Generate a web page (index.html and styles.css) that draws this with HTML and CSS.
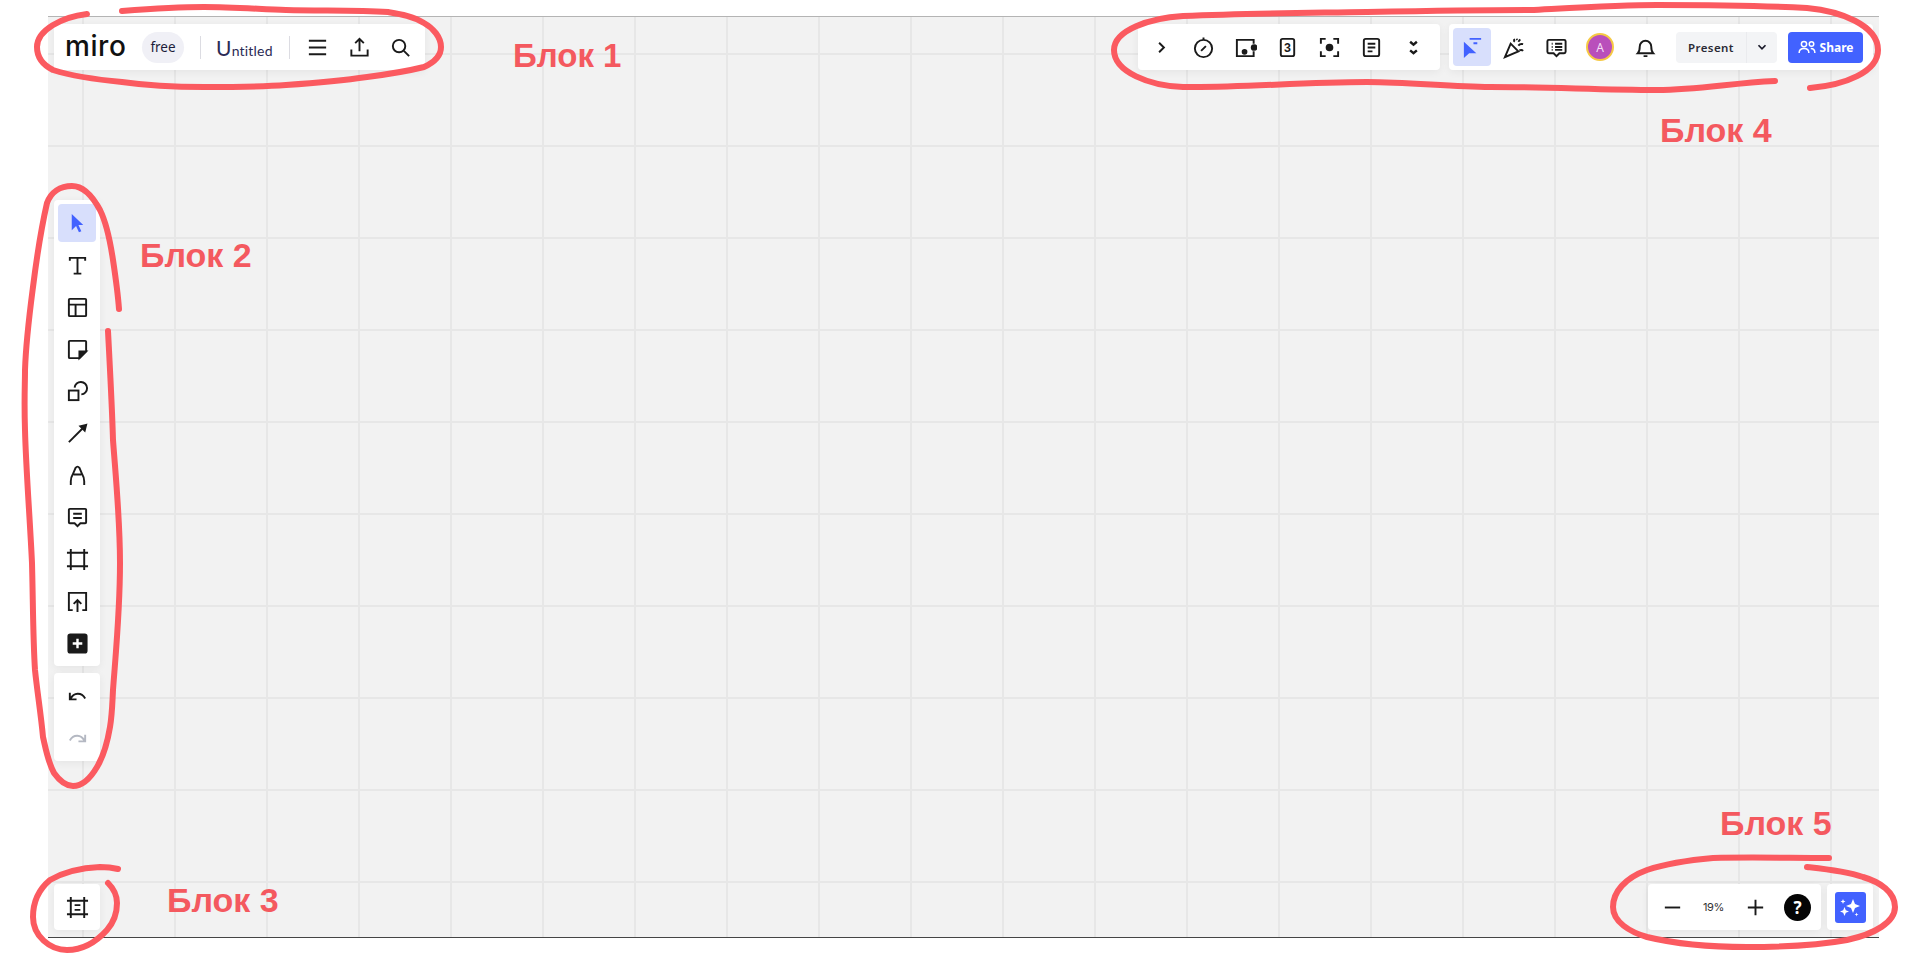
FILE: index.html
```html
<!DOCTYPE html>
<html lang="en">
<head>
    <meta charset="UTF-8">
    <meta name="viewport" content="width=device-width, initial-scale=1.0">
    <title>Miro board</title>
    <link rel="stylesheet" href="styles.css">
</head>
<body>

<main class="board">
    <div class="top-row">
        <div class="panel brand-panel">
            <span class="logo">miro</span>
            <span class="plan-pill">free</span>
            <span class="divider"></span>
            <span class="board-title"><span class="board-initial">U</span>ntitled</span>
            <span class="divider"></span>
            <button class="tool menu-tool"><svg class="icon" viewBox="0 0 24 24"><path d="M3 5h18M3 12h18M3 19h18"/></svg></button>
            <button class="tool"><svg class="icon" viewBox="0 0 24 24"><path d="M12 16V3M7.500 7.500 12 3l4.500 4.500M3.500 14v6.500h17V14"/></svg></button>
            <button class="tool"><svg class="icon" viewBox="0 0 24 24"><circle cx="10.500" cy="10.500" r="6.500"/><path d="m15.500 15.500 5.500 5.500"/></svg></button>
        </div>

        <div class="panel apps-panel">
            <button class="tool"><svg class="icon" viewBox="0 0 24 24"><path d="m9.500 7 5 5-5 5"/></svg></button>
            <button class="tool"><svg class="icon" viewBox="0 0 24 24"><circle cx="12" cy="13" r="9"/><path d="M12 1.500V4M9.500 15.500l5-5"/></svg></button>
            <button class="tool"><svg class="icon" viewBox="0 0 24 24"><path d="M20.500 8V4H3v17h17.500v-5"/><circle cx="11" cy="16.500" r="2" class="solid"/><circle cx="21" cy="12" r="2.500" class="solid"/></svg></button>
            <button class="tool"><svg class="icon" viewBox="0 0 24 24"><rect x="5" y="3" width="14" height="18" rx="2"/><text x="12" y="17" class="card-number">3</text></svg></button>
            <button class="tool"><svg class="icon" viewBox="0 0 24 24"><path d="M3 8V3h5M16 3h5v5M21 16v5h-5M8 21H3v-5"/><circle cx="12" cy="12" r="3" class="solid"/></svg></button>
            <button class="tool"><svg class="icon" viewBox="0 0 24 24"><rect x="4" y="3" width="16" height="18" rx="2"/><path d="M8 8h8M8 12h8M8 16h5"/></svg></button>
            <button class="tool"><svg class="icon chevrons" viewBox="0 0 24 24"><path d="m8.500 6 3.500 3 3.500-3M8.500 15l3.500 3 3.500-3"/></svg></button>
        </div>

        <div class="panel collab-panel">
            <button class="tool tool-active"><svg class="icon" viewBox="0 0 24 24"><path class="blue-fill" d="M3 6v17l5.500-5H16z"/><path class="blue-line" d="M9 3h12M13 7.500h4"/></svg></button>
            <button class="tool"><svg class="icon" viewBox="0 0 24 24"><path d="M2 22 8 8l8 8zM11 6c1-1 1-2 .5-3M16 10c1.500-2 3-2 5-1.500M17 15c1.500-.500 3-.500 4 .500M14 3l1 1M18 3.500l-2 2.500"/></svg></button>
            <button class="tool"><svg class="icon" viewBox="0 0 24 24"><path d="M4 4h16a1.500 1.500 0 0 1 1.500 1.500v11A1.500 1.500 0 0 1 20 18h-5l-3 3-3-3H4a1.500 1.500 0 0 1-1.500-1.500v-11A1.500 1.500 0 0 1 4 4zM7 8h1M7 11.500h1M7 14.500h1M10.500 8H18M10.500 11.500H18M10.500 14.500H18"/></svg></button>
            <span class="avatar">A</span>
            <button class="tool bell-tool"><svg class="icon" viewBox="0 0 24 24"><path d="M4 18c2-2 2-4 2-7a6 6 0 0 1 12 0c0 3 0 5 2 7zM10 21h4"/></svg></button>
            <div class="present-split">
                <span class="present-label">Present</span>
                <span class="present-caret"><svg class="caret" viewBox="0 0 24 24"><path d="m6 9 6 6 6-6"/></svg></span>
            </div>
            <button class="share-button"><svg class="share-icon" viewBox="0 0 24 24"><circle cx="8" cy="8" r="3.500"/><circle cx="18" cy="8" r="3"/><path d="M1.500 20c0-4 2.500-6 6.500-6s6.500 2 6.500 6M17 14c3.500 0 5.500 2 5.500 6"/></svg>Share</button>
        </div>
    </div>

    <div class="side-tools">
        <div class="panel tool-column">
            <button class="tool tool-active"><svg class="icon" viewBox="0 0 24 24"><path class="blue-fill" d="M6 2v17l4.500-4.500 3 6.500 2.500-1-3-6.500h5z"/></svg></button>
            <button class="tool"><svg class="icon" viewBox="0 0 24 24"><path d="M4 7V4h16v3M12 4v16M8 20.500h8"/></svg></button>
            <button class="tool"><svg class="icon" viewBox="0 0 24 24"><rect x="3" y="3" width="18" height="18" rx="1"/><path d="M3 9h18M10 9v12"/></svg></button>
            <button class="tool"><svg class="icon" viewBox="0 0 24 24"><path d="M21 14V4a1 1 0 0 0-1-1H4a1 1 0 0 0-1 1v16a1 1 0 0 0 1 1h10z"/><path class="solid" d="M21 14h-7v7z"/></svg></button>
            <button class="tool"><svg class="icon" viewBox="0 0 24 24"><rect x="3" y="11" width="10" height="10"/><path d="M9 8a6.500 6.500 0 1 1 7 7"/></svg></button>
            <button class="tool"><svg class="icon" viewBox="0 0 24 24"><path d="M3 21 18 6"/><path class="solid" d="M21 3l-6 1.500 4.500 4.500z"/></svg></button>
            <button class="tool"><svg class="icon" viewBox="0 0 24 24"><path d="M5 22v-4q0-4 2-7L10 4q2-2.500 4 0l3 7q2 3 2 7v4M8 11h8"/></svg></button>
            <button class="tool"><svg class="icon" viewBox="0 0 24 24"><path d="M4 3h16a1 1 0 0 1 1 1v13a1 1 0 0 1-1 1h-5l-3 3-3-3H4a1 1 0 0 1-1-1V4a1 1 0 0 1 1-1zM7.500 8h9M7.500 12.500h9"/></svg></button>
            <button class="tool"><svg class="icon" viewBox="0 0 24 24"><path d="M1 5h22M1 19h22M5 1v22M19 1v22"/></svg></button>
            <button class="tool"><svg class="icon" viewBox="0 0 24 24"><path d="M7 21H3V3h18v18h-4M12 23V11M8 14.500l4-4 4 4"/></svg></button>
            <button class="tool"><svg class="icon" viewBox="0 0 24 24"><rect x="2.500" y="2.500" width="19" height="19" rx="2" class="solid"/><path class="white-line" d="M12 7v10M7 12h10"/></svg></button>
        </div>
        <div class="panel tool-column">
            <button class="tool"><svg class="icon" viewBox="0 0 24 24"><path d="M5 14c3-6 11-7 15 0M4 8v7h7"/></svg></button>
            <button class="tool tool-disabled"><svg class="icon" viewBox="0 0 24 24"><path d="M19 14c-3-6-11-7-15 0M20 8v7h-7"/></svg></button>
        </div>
    </div>

    <div class="bottom-row">
        <div class="panel frames-panel">
            <button class="tool"><svg class="icon" viewBox="0 0 24 24"><path d="M1 5h22M1 19h22M5 1v22M19 1v22M9 9.500h6M9 14.500h6"/></svg></button>
        </div>
        <div class="panel zoom-panel">
            <button class="tool"><svg class="icon" viewBox="0 0 24 24"><path d="M4 12h16"/></svg></button>
            <span class="zoom-value">19%</span>
            <button class="tool"><svg class="icon" viewBox="0 0 24 24"><path d="M4 12h16M12 4v16"/></svg></button>
            <span class="help-badge">?</span>
        </div>
        <div class="panel magic-panel">
            <span class="magic-button"><svg class="magic-icon" viewBox="0 0 24 24"><path d="m15 4 2 5 5 2-5 2-2 5-2-5-5-2 5-2zM6.500 12l1.300 3.200L11 16.500l-3.200 1.300L6.500 21l-1.300-3.200L2 16.500l3.200-1.300zM5 4l.7 1.800 1.800.7-1.800.7L5 9l-.7-1.800-1.800-.7 1.800-.7zM18.500 17.500l.5 1.500 1.500.5-1.500.5-.5 1.500-.5-1.500-1.500-.5 1.500-.5z"/></svg></span>
        </div>
    </div>
</main>

<!-- hand drawn marks over the screenshot -->
<svg class="marks" viewBox="0 0 1919 958">
    <path d="M87 14C62 17 37 30 37 47C37 60 45 66 53 70C75 77 100 80 122 82C150 86 175 87 204 87C230 87 260 87 286 85C315 83 340 81 367 77C390 74 408 71 424 67C435 62 441 55 441 47C441 37 433 28 424 23C413 16 400 14 388 12C355 10 320 11 286 10C258 9 232 7 204 7C175 7 148 9 122 11"/>
    <path d="M1775 81C1730 83 1700 90 1657 90C1600 90 1550 87 1490 87C1450 87 1410 82 1367 82C1300 82 1240 88 1183 87C1150 86 1114 72 1114 50C1114 30 1150 18 1183 16C1250 13 1300 13 1367 12C1420 11 1480 10 1530 10C1570 8 1620 5 1657 5C1710 5 1770 6 1807 8C1840 11 1878 25 1878 50C1878 72 1845 85 1810 88"/>
    <path d="M108 331C110 370 112 405 113 440C116 480 120 520 120 563C120 610 116 650 113 690C112 710 112 715 110 727C107 745 103 757 97 767C90 779 82 786 73 786C65 786 59 780 54 773C48 762 46 750 43 737C41 715 37 690 35 670C33 640 33 600 32 563C30 520 26 470 25 430C24 400 25 385 25 370C26 340 30 310 33 287C37 255 42 225 47 203C51 192 60 186 72 186C84 186 93 197 100 210C106 222 110 240 113 260C116 280 118 295 119 309"/>
    <path d="M118 869C110 867 105 867 100 867C78 868 62 873 50 880C38 890 33 903 33 917C33 936 50 950 67 950C85 950 98 940 107 930C114 922 117 912 117 903C117 894 113 888 108 883"/>
    <path d="M1829 858C1790 858 1750 857 1713 858C1690 860 1665 864 1647 870C1625 878 1613 892 1613 907C1613 922 1630 932 1647 937C1680 945 1715 947 1747 947C1785 947 1820 945 1847 940C1875 934 1895 922 1895 907C1895 892 1880 882 1863 877C1845 871 1825 869 1807 867"/>
</svg>
<span class="mark-label label-one">Блок 1</span>
<span class="mark-label label-two">Блок 2</span>
<span class="mark-label label-three">Блок 3</span>
<span class="mark-label label-four">Блок 4</span>
<span class="mark-label label-five">Блок 5</span>

</body>
</html>
```

FILE: styles.css
```css
html, body {
    margin: 0;
    height: 100%;
}
body {
    position: relative;
    background-color: #fff;
    font-family: "Noto Sans", sans-serif;
    overflow: hidden;
    padding: 16px 40px 0 48px;
    box-sizing: border-box;
}
button {
    border: none;
    background: none;
    padding: 0;
    font-family: inherit;
}
.board {
    height: 922px;
    box-sizing: border-box;
    display: flex;
    flex-direction: column;
    padding: 7px 6px 7px 6px;
    background-color: #f2f2f2;
    background-image:
        linear-gradient(#e7e7e7 2px, transparent 2px),
        linear-gradient(90deg, #e7e7e7 2px, transparent 2px);
    background-size: 92px 92px;
    background-position: 34px 36px;
    border-top: 1px solid #b4b4b4;
    border-bottom: 1px solid #454545;
}
.panel {
    display: flex;
    align-items: center;
    background-color: #fff;
    border-radius: 4px;
    box-shadow: 0 2px 8px rgba(0, 0, 0, 0.06);
}
.tool {
    flex: none;
    width: 38px;
    height: 38px;
    display: flex;
    align-items: center;
    justify-content: center;
    border-radius: 4px;
    color: #1a1a1a;
}
.tool-active {
    background-color: #d8dffc;
}
.tool-disabled {
    color: #b4b8c2;
}
.icon {
    width: 23px;
    height: 23px;
    fill: none;
    stroke: currentColor;
    stroke-width: 2;
}
.chevrons {
    stroke-width: 2.500;
}
.solid {
    fill: currentColor;
}
.blue-fill {
    fill: #4262ff;
    stroke: none;
}
.blue-line {
    stroke: #4262ff;
}
.white-line {
    stroke: #fff;
    stroke-width: 2.500;
}
.card-number {
    font-family: "Liberation Sans", sans-serif;
    font-size: 13px;
    font-weight: 700;
    text-anchor: middle;
    fill: currentColor;
    stroke: none;
}

/* top row */
.top-row {
    display: flex;
    height: 46px;
}
.brand-panel {
    width: 371px;
    margin-right: auto;
    box-sizing: border-box;
    padding-left: 11px;
}
.logo {
    font-family: Inter, sans-serif;
    font-size: 28px;
    font-weight: 500;
    letter-spacing: 0.6px;
    color: #111;
    width: 77px;
    line-height: 46px;
    margin-top: -3px;
}
.plan-pill {
    width: 42px;
    height: 31px;
    display: flex;
    align-items: center;
    justify-content: center;
    border-radius: 16px;
    background-color: #f0f0f6;
    font-size: 13.500px;
    color: #1d1d3a;
}
.divider {
    width: 1px;
    height: 23px;
    background-color: #dcdce2;
}
.plan-pill + .divider {
    margin-left: 16px;
}
.board-title {
    width: 58px;
    margin: 0 15px;
    font-family: Lato, sans-serif;
    font-size: 14px;
    letter-spacing: 0.2px;
    white-space: nowrap;
    color: #2b2b55;
}
.board-initial {
    font-size: 21px;
}
.menu-tool {
    margin-left: 8px;
    margin-right: 4px;
}
.menu-tool + .tool {
    margin-right: 3px;
}
.apps-panel {
    width: 302px;
    box-sizing: border-box;
    padding-left: 4px;
    gap: 4px;
    margin-right: 9px;
}
.collab-panel {
    width: 424px;
    box-sizing: border-box;
    padding-left: 4px;
    gap: 4px;
}
.avatar {
    flex: none;
    width: 24px;
    height: 24px;
    margin-left: 7px;
    display: flex;
    align-items: center;
    justify-content: center;
    border-radius: 50%;
    border: 2px solid #f6c944;
    background-color: #b94fbb;
    color: #f3dff5;
    font-size: 12px;
}
.bell-tool {
    margin-left: 8px;
}
.present-split {
    display: flex;
    width: 101px;
    height: 31px;
    margin-left: 8px;
    border-radius: 4px;
    background-color: #f3f4f6;
    font-size: 11.500px;
    font-weight: 600;
    color: #2a2a35;
}
.present-label {
    width: 70px;
    display: flex;
    align-items: center;
    justify-content: center;
    letter-spacing: 0.4px;
    border-right: 1px solid #eaebee;
}
.present-caret {
    flex: 1;
    display: flex;
    align-items: center;
    justify-content: center;
}
.caret {
    width: 14px;
    height: 14px;
    fill: none;
    stroke: #1a1a2a;
    stroke-width: 3;
}
.share-button {
    width: 75px;
    height: 31px;
    margin-left: 7px;
    display: flex;
    align-items: center;
    justify-content: center;
    gap: 4px;
    border-radius: 4px;
    background-color: #4262ff;
    color: #fff;
    font-size: 12px;
    font-weight: 700;
}
.share-icon {
    width: 18px;
    height: 18px;
    fill: none;
    stroke: #fff;
    stroke-width: 2;
}

/* left toolbar */
.side-tools {
    display: flex;
    flex-direction: column;
    gap: 7px;
    margin: 130px 0 0 0;
    width: 46px;
}
.tool-column {
    flex-direction: column;
    gap: 4px;
    padding: 4px;
}

/* bottom row */
.bottom-row {
    display: flex;
    margin-top: auto;
    height: 46px;
}
.frames-panel {
    width: 46px;
    justify-content: center;
    margin-right: auto;
}
.zoom-panel {
    width: 173px;
    box-sizing: border-box;
    padding-left: 5px;
    margin-right: 6px;
}
.zoom-value {
    width: 45px;
    text-align: center;
    font-family: Inter, sans-serif;
    font-size: 11px;
    letter-spacing: -0.3px;
    color: #333;
}
.help-badge {
    width: 27px;
    height: 27px;
    margin-left: 10px;
    display: flex;
    align-items: center;
    justify-content: center;
    border-radius: 50%;
    background-color: #050505;
    color: #fff;
    font-size: 17px;
    font-weight: 700;
}
.magic-panel {
    width: 46px;
    justify-content: center;
}
.magic-button {
    width: 31px;
    height: 31px;
    display: flex;
    align-items: center;
    justify-content: center;
    border-radius: 3px;
    background-color: #4262ff;
}
.magic-icon {
    width: 24px;
    height: 24px;
    fill: #fff;
}

/* annotations over the screenshot */
.marks {
    position: absolute;
    left: 0;
    top: 0;
    width: 1919px;
    height: 958px;
    fill: none;
    stroke: #fb5a60;
    stroke-width: 6;
    stroke-linecap: round;
    pointer-events: none;
}
.mark-label {
    position: absolute;
    font-family: "Liberation Sans", sans-serif;
    font-size: 34px;
    font-weight: 700;
    line-height: 40px;
    white-space: nowrap;
    color: #f4595f;
}
.label-one { left: 513px; top: 36px; font-size: 33px; }
.label-two { left: 140px; top: 235px; }
.label-three { left: 167px; top: 880px; }
.label-four { left: 1660px; top: 110px; }
.label-five { left: 1720px; top: 803px; }
```
